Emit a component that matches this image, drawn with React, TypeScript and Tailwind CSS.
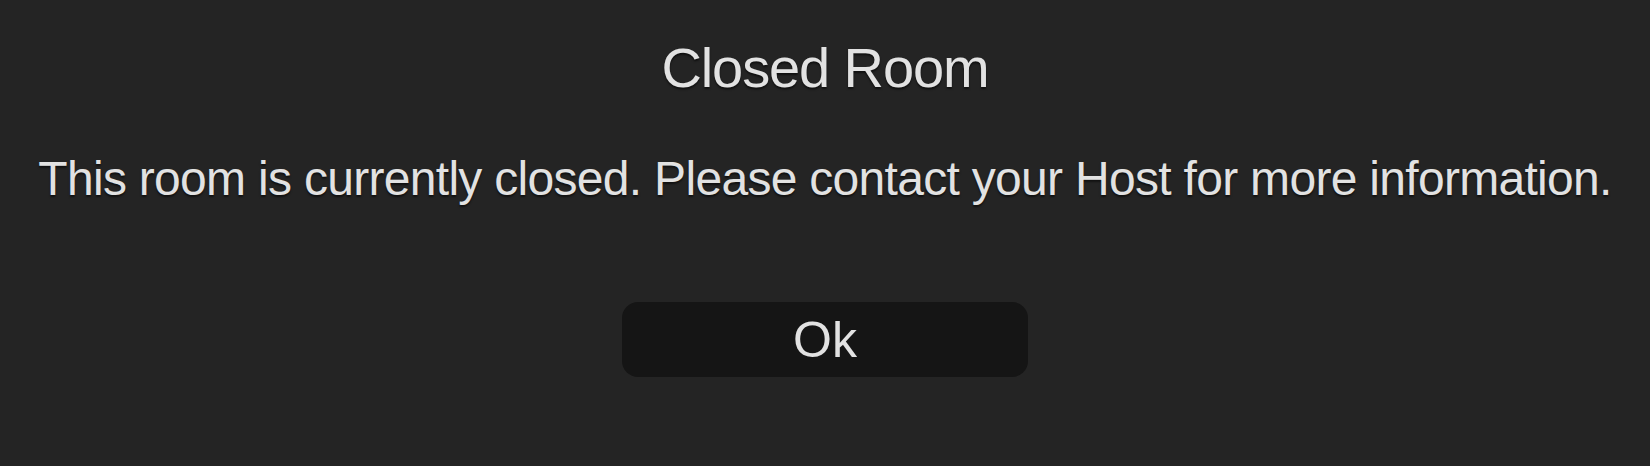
export default function App() {
  return (
    <div className="h-[466px] w-full overflow-hidden bg-[#242424] font-['Liberation_Sans',Arial,sans-serif] text-[#e2e2e2]">
      <div className="flex flex-col items-center pt-[40px]">
        <h1 className="text-[56px] leading-none tracking-[-1.1px] [text-shadow:0_2px_2px_rgba(0,0,0,0.55)]">
          Closed Room
        </h1>
        <p className="mt-[59px] whitespace-nowrap text-[48px] leading-none tracking-[-0.7px] [text-shadow:0_2px_2px_rgba(0,0,0,0.55)]">
          This room is currently closed. Please contact your Host for more information.
        </p>
        <button className="mt-[99px] flex h-[75px] w-[406px] items-center justify-center rounded-[16px] bg-[#151515] text-[50px] leading-none text-[#e2e2e2]">
          Ok
        </button>
      </div>
    </div>
  );
}
